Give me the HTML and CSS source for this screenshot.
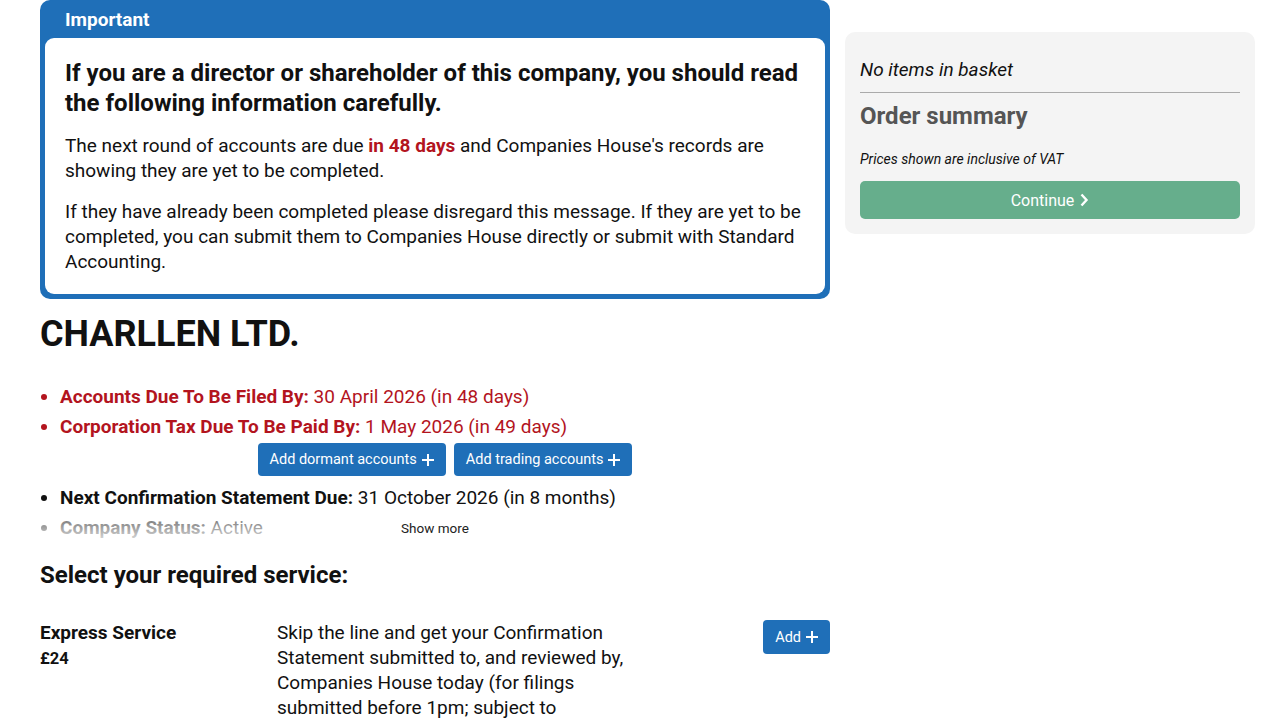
FILE: index.html
```html
<!DOCTYPE html>
<html lang="en">
<head>
    <meta charset="UTF-8">
    <meta name="viewport" content="width=device-width, initial-scale=1.0">
    <title>CHARLLEN LTD. - Confirmation Statement</title>
    <link rel="stylesheet" href="styles.css">
</head>
<body>
    <div class="page">
        <div class="main-col">
            <div class="notice">
                <div class="notice-title">Important</div>
                <div class="notice-body">
                    <h2>If you are a director or shareholder of this company, you should read the following information carefully.</h2>
                    <p>The next round of accounts are due <strong class="due">in 48 days</strong> and Companies House's records are showing they are yet to be completed.</p>
                    <p>If they have already been completed please disregard this message. If they are yet to be completed, you can submit them to Companies House directly or submit with Standard Accounting.</p>
                </div>
            </div>

            <h1 class="company-name">CHARLLEN LTD.</h1>

            <div class="details">
                <ul class="details-list">
                    <li class="overdue"><strong>Accounts Due To Be Filed By:</strong> 30 April 2026 (in 48 days)</li>
                    <li class="overdue"><strong>Corporation Tax Due To Be Paid By:</strong> 1 May 2026 (in 49 days)
                        <div class="accounts-actions">
                            <button class="btn-blue">Add dormant accounts <span class="plus"></span></button>
                            <button class="btn-blue">Add trading accounts <span class="plus"></span></button>
                        </div>
                    </li>
                    <li><strong>Next Confirmation Statement Due:</strong> 31 October 2026 (in 8 months)</li>
                    <li><strong>Company Status:</strong> Active</li>
                    <li><strong>Incorporated On:</strong> 12 October 2021</li>
                </ul>
                <div class="details-fade"></div>
                <button class="show-more">Show more</button>
            </div>

            <h2 class="section-title">Select your required service:</h2>

            <div class="service">
                <div class="service-name">
                    <strong>Express Service</strong>
                    <span class="price">£24</span>
                </div>
                <div class="service-desc">Skip the line and get your Confirmation Statement submitted to, and reviewed by, Companies House today (for filings submitted before 1pm; subject to Companies House opening hours).</div>
                <div class="service-add">
                    <button class="btn-blue btn-small">Add <span class="plus"></span></button>
                </div>
            </div>
        </div>

        <div class="side-col">
            <div class="basket">
                <p class="basket-empty">No items in basket</p>
                <hr>
                <h2>Order summary</h2>
                <p class="vat-note">Prices shown are inclusive of VAT</p>
                <button class="continue-btn">Continue
                    <svg width="10" height="14" viewBox="0 0 10 14"><path d="M2.5 1.5 L7.5 7 L2.5 12.5" fill="none" stroke="#fff" stroke-width="2.4"/></svg>
                </button>
            </div>
        </div>
    </div>
</body>
</html>
```

FILE: styles.css
```css
body {
    margin: 0;
    font-family: Roboto, 'Liberation Sans', sans-serif;
    color: #111;
    background-color: #fff;
}
.page {
    display: grid;
    grid-template-columns: 790px 410px;
    gap: 15px;
    padding: 0 25px 0 40px;
}
.notice {
    background-color: #1f6fb8;
    border-radius: 10px;
    padding: 0 5px 5px;
}
.notice-title {
    color: #fff;
    font-weight: bold;
    font-size: 19px;
    line-height: 37px;
    padding: 1px 0 0 20px;
}
.notice-body {
    background-color: #fff;
    border-radius: 9px;
    padding: 20px;
}
.notice-body h2 {
    font-size: 24px;
    line-height: 30px;
    margin: 0 0 15px;
}
.notice-body p {
    font-size: 19px;
    line-height: 25px;
    margin: 0 0 16px;
}
.notice-body p:last-child {
    margin-bottom: 0;
}
.due {
    color: #b3141e;
}
.company-name {
    font-size: 36px;
    line-height: 42px;
    margin: 14px 0 0;
}
.details {
    position: relative;
    margin-top: 27px;
    max-height: 161px;
    overflow: hidden;
}
.details-list {
    margin: 0;
    padding-left: 20px;
    font-size: 19px;
    line-height: 30px;
}
.details-list li.overdue {
    color: #b3141e;
}
.accounts-actions {
    display: flex;
    justify-content: center;
    gap: 8px;
    margin: 1px 0 7px;
}
.btn-blue {
    display: inline-flex;
    align-items: center;
    gap: 5px;
    background-color: #1f6fb8;
    color: #fff;
    border: none;
    border-radius: 4px;
    font-family: inherit;
    font-size: 14.5px;
    height: 33px;
    padding: 0 12px;
    cursor: pointer;
}
.plus {
    position: relative;
    display: inline-block;
    width: 12px;
    height: 12px;
}
.plus::before,
.plus::after {
    content: "";
    position: absolute;
    background-color: #fff;
}
.plus::before {
    left: 0;
    top: 5px;
    width: 12px;
    height: 2px;
}
.plus::after {
    left: 5px;
    top: 0;
    width: 2px;
    height: 12px;
}
.details-fade {
    position: absolute;
    left: 0;
    right: 0;
    bottom: 0;
    height: 34px;
    background: linear-gradient(rgba(255,255,255,0.25), rgba(255,255,255,0.9));
}
.show-more {
    position: absolute;
    left: 50%;
    bottom: 6px;
    transform: translateX(-50%);
    background: none;
    border: none;
    font-family: inherit;
    font-size: 13.5px;
    color: #222;
    cursor: pointer;
}
.section-title {
    font-size: 24px;
    line-height: 28px;
    margin: 18px 0 0;
}
.service {
    display: grid;
    grid-template-columns: 30% 45% 25%;
    margin-top: 31px;
}
.service-name strong {
    display: block;
    font-size: 19px;
    line-height: 25px;
}
.price {
    display: block;
    font-weight: bold;
    font-size: 16.5px;
    line-height: 28px;
}
.service-desc {
    font-size: 19px;
    line-height: 25px;
}
.service-add {
    display: flex;
    justify-content: flex-end;
    align-items: flex-start;
}
.btn-small {
    height: 34px;
    padding: 0 12px;
}
.basket {
    margin-top: 32px;
    background-color: #f4f4f4;
    border-radius: 10px;
    padding: 15px;
}
.basket-empty {
    font-style: italic;
    font-size: 19px;
    line-height: 25px;
    margin: 10px 0 0;
}
.basket hr {
    border: none;
    border-top: 1px solid #aaa;
    margin: 10px 0 0;
}
.basket h2 {
    color: #555;
    font-size: 24px;
    line-height: 28px;
    margin: 9px 0 0;
}
.vat-note {
    font-style: italic;
    font-size: 14px;
    line-height: 18px;
    margin: 20px 0 0;
}
.continue-btn {
    display: flex;
    align-items: center;
    justify-content: center;
    gap: 5px;
    width: 100%;
    height: 38px;
    margin-top: 13px;
    background-color: #66ae8c;
    color: #fff;
    border: none;
    border-radius: 5px;
    font-family: inherit;
    font-size: 16px;
    cursor: pointer;
}
```
